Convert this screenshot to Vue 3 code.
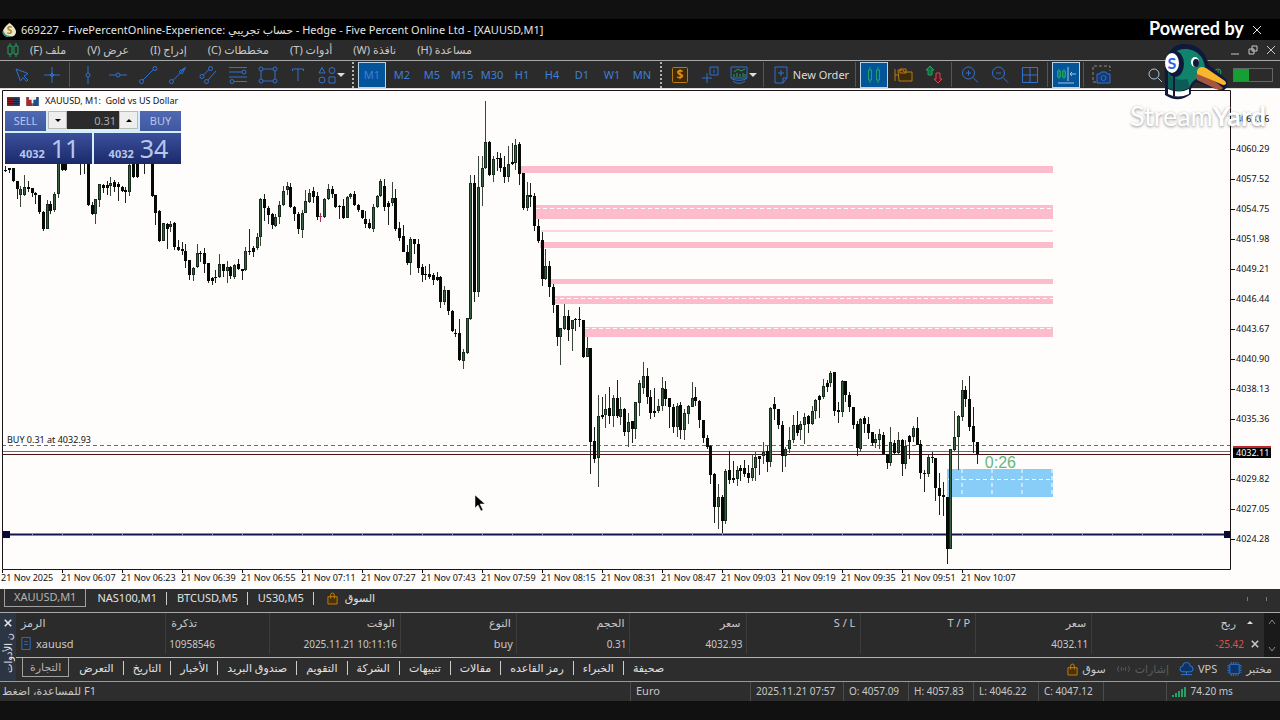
<template>
  <div class="screen">
    <header class="title-bar">
      <svg class="app-icon" viewBox="0 0 16 16">
        <path d="M8 1c3 2 7 6 7 9.500a5 5 0 0 1-5 5H6a5 5 0 0 1-5-5C1 7 5 3 8 1z" fill="#e9e6cf" />
        <path d="M1 10c1 4 3 5.500 7 5.500" stroke="#3f8f80" stroke-width="2" fill="none" />
        <text x="8" y="13" text-anchor="middle" font-size="11" font-weight="700" fill="#b08a1c">S</text>
      </svg>
      <h1>669227 - FivePercentOnline-Experience: <bdi>حساب تجريبي</bdi> - Hedge - Five Percent Online Ltd - [XAUUSD,M1]</h1>
      <button class="plain close" aria-label="Close">
        <svg viewBox="0 0 10 10"><path d="M1 1l8 8M9 1l-8 8" /></svg>
      </button>
    </header>

    <nav class="menu-bar">
      <svg class="menu-icon" viewBox="0 0 12 14">
        <path d="M3 0v3M3 11v3M9 0v3M9 11v3M1 3h4v8H1zM7 3h4v8H7z" />
      </svg>
      <button v-for="item in menu" :key="item" class="plain menu-item" dir="rtl">{{ item }}</button>
      <div class="window-buttons">
        <button class="plain" aria-label="Minimize"><svg viewBox="0 0 10 10"><path d="M1 9h8" /></svg></button>
        <button class="plain" aria-label="Restore"><svg viewBox="0 0 10 10"><path d="M4 1h5v5H4zM1 4h5v5H1z" /></svg></button>
        <button class="plain" aria-label="Close chart"><svg viewBox="0 0 10 10"><path d="M1 1l8 8M9 1l-8 8" /></svg></button>
      </div>
    </nav>

    <div class="toolbar">
      <button v-for="tool in pointerTools" :key="tool.name" class="tool" :aria-label="tool.name">
        <svg viewBox="0 0 20 20"><path :d="tool.d" /></svg>
      </button>
      <i class="sep"></i>
      <button v-for="tool in drawTools" :key="tool.name" class="tool" :aria-label="tool.name">
        <svg viewBox="0 0 20 20"><path :d="tool.d" /></svg>
      </button>
      <button class="tool with-caret" aria-label="Shapes">
        <svg viewBox="0 0 20 20"><path d="M5 2.500L8 8H2zM15 2.500a3 3 0 1 1 0 6a3 3 0 1 1 0-6M5 12a3 3 0 1 1 0 6a3 3 0 1 1 0-6M12 12h6v6h-6z" /></svg>
        <i class="caret"></i>
      </button>
      <i class="grip"></i>
      <button v-for="tf in timeframes" :key="tf" class="tool" :class="{ active: tf === timeframe }" @click="timeframe = tf">{{ tf }}</button>
      <i class="grip"></i>
      <button class="tool gold" aria-label="Symbols">
        <svg viewBox="0 0 20 20">
          <rect x="2.500" y="2.500" width="15" height="15" rx="1" fill="#3d2a08" />
          <text x="10" y="14" text-anchor="middle" font-size="12" font-weight="700">$</text>
        </svg>
      </button>
      <button class="tool" aria-label="Data window">
        <svg viewBox="0 0 20 20"><path d="M7 8v10M2 13h10M10 2h8v8h-8zM14 5v3M14 3.500v.5" /></svg>
      </button>
      <button class="tool with-caret" aria-label="Indicators">
        <svg viewBox="0 0 20 20">
          <path d="M2 2h16v11H2zM2 13c2 3 14 3 16 0M4 16c3 3 9 3 12 0" />
          <path class="green" d="M5 7l4-3 3 2 4-2M5 12V9M8 12V8M11 12V9M14 12V8M16 12V9" />
        </svg>
        <i class="caret"></i>
      </button>
      <i class="sep"></i>
      <button class="tool new-order">
        <svg viewBox="0 0 20 20"><path d="M4 2h12v11l-4 5H4zM16 13h-4v5M7 8h6M10 5v6" /></svg>
        New Order
      </button>
      <i class="sep"></i>
      <button class="tool active" aria-label="Candles">
        <svg class="green" viewBox="0 0 20 20"><path d="M6 2v3M6 15v3M14 2v3M14 15v3M4.500 5h3v10h-3zM12.500 5h3v10h-3z" /></svg>
      </button>
      <button class="tool gold" aria-label="Objects">
        <svg viewBox="0 0 20 20"><path d="M1 4v12M1 10h4M4 5h5l1 2h8v9H5z" fill="#3d2a08" /><path d="M6 4h6v4H6z" /></svg>
      </button>
      <button class="tool" aria-label="Auto trading">
        <svg viewBox="0 0 20 20">
          <path class="green" d="M6 1l4 4H8v5H4V5H2z" fill="#17693f" />
          <path class="red" d="M14 18l-4-4h2V8h4v6h2z" fill="#5c1820" />
        </svg>
      </button>
      <i class="sep"></i>
      <button class="tool" aria-label="Zoom in">
        <svg viewBox="0 0 20 20"><circle cx="8.500" cy="8" r="6" /><path d="M13 12.500l5 5M6 8h5M8.500 5.500v5" /></svg>
      </button>
      <button class="tool" aria-label="Zoom out">
        <svg viewBox="0 0 20 20"><circle cx="8.500" cy="8" r="6" /><path d="M13 12.500l5 5M6 8h5" /></svg>
      </button>
      <button class="tool" aria-label="Tile windows">
        <svg viewBox="0 0 20 20"><path d="M2.500 2.500h15v15h-15zM10 2.500v15M2.500 10h15" /></svg>
      </button>
      <i class="sep"></i>
      <button class="tool active" aria-label="Chart shift">
        <svg viewBox="0 0 20 20">
          <path class="green" d="M3 4v10M1.500 6h3v6h-3zM8 4v10M6.500 6h3v6h-3z" />
          <path class="pale" d="M12 2v14M20 9h-6M16 7l-2 2 2 2M2 18h16" />
        </svg>
      </button>
      <i class="sep"></i>
      <button class="tool" aria-label="Screenshot">
        <svg viewBox="0 0 20 20">
          <path class="grey" stroke-dasharray="3 2" d="M4 17H1V1h17v5" />
          <path d="M5 9h3l1-2h5l1 2h3v9H5z" fill="#123a70" /><circle cx="11.500" cy="13" r="2.500" />
        </svg>
      </button>
      <div class="toolbar-end">
        <button class="tool" aria-label="Search">
          <svg class="pale" viewBox="0 0 20 20"><circle cx="9" cy="9" r="5" /><path d="M13 13l4 4" /></svg>
        </button>
        <button class="tool" aria-label="Update">
          <svg class="green" viewBox="0 0 20 20"><circle cx="10" cy="7" r="3" /><path d="M10 5v10" /></svg>
        </button>
        <span class="battery"><i></i></span>
      </div>
    </div>

    <main class="chart">
      <div class="plot">
        <svg class="plot-canvas" viewBox="0 0 1231 481" preserveAspectRatio="none">
          <g transform="translate(0 1)">
            <rect v-for="zone in zones" :key="zone.y" :x="zone.x" :y="zone.y" :width="1053 - zone.x" :height="zone.h" :fill="zone.fill" />
            <path d="M536 118.500h517M553 208.500h500M585 238.500h468" class="grid-line" />
            <path d="M948 389.500h105M962 379v28M992 379v28M1022 379v28M1052 379v28" class="grid-line" />
            <path d="M2 355.500H1230" stroke="#3f8a4c" stroke-dasharray="4 3" />
            <path d="M2 361.500H1230" stroke="#c4474d" />
            <path d="M2 364.500H1230" stroke="#4a1518" />
            <path d="M2 444.500H1230" stroke="#14124f" stroke-width="2" />
            <path d="M32 444.500H1230" stroke="#9a98c4" stroke-width="2" stroke-dasharray="1 29" />
            <path d="M3 441h7v7H3zM1224 441h7v7h-7z" fill="#0a0a38" />
            <g v-for="(c, i) in candles" :key="i" :class="['candle', c[4] === 1 ? 'up' : c[4] === 2 ? 'flat' : 'down']">
              <path class="wick" :d="`M${candleX(i) + 0.5} ${c[0]}V${c[3]}`" />
              <rect :x="candleX(i) - 1" :y="c[1]" width="3" :height="Math.max(c[2] - c[1], 1)" />
              <path v-if="c[4] === 1 && c[2] - c[1] > 2" class="core" :d="`M${candleX(i) + 0.5} ${c[1] + 1}V${c[2] - 1}`" />
            </g>
            <path d="M2.500 479.500V.5H1230.500V479.500z" class="frame" />
          </g>
        </svg>

        <div class="symbol-title">
          <svg viewBox="0 0 14 10"><path d="M0 0h14v10H0z" fill="#26406f" /><path d="M0 0h7v10H0z" fill="#8f1f22" /><path d="M0 2.500h14M0 5h14M0 7.500h14" stroke="#18182a" /></svg>
          <svg viewBox="0 0 14 10"><path d="M0 0h7v10H0z" fill="#a32a2e" /><path d="M7 0h7v10H7z" fill="#1c4f82" /><path d="M3 0h8v3H8v4H6V3H3z" fill="#f2f2f2" /></svg>
          <span>XAUUSD, M1:&nbsp; Gold vs US Dollar</span>
        </div>

        <div class="trade-panel">
          <span class="side">SELL</span>
          <div class="volume">
            <button aria-label="Less" @click="step(-0.01)"><i class="caret dark"></i></button>
            <input v-model="volume" aria-label="Volume" />
            <button aria-label="More" @click="step(0.01)"><i class="caret dark up"></i></button>
          </div>
          <span class="side">BUY</span>
          <div class="quotes">
            <button class="quote"><b>4032</b><span>11</span></button>
            <button class="quote"><b>4032</b><span>34</span></button>
          </div>
        </div>

        <span class="position-label">BUY 0.31 at 4032.93</span>
        <span class="countdown">0:26</span>
        <svg class="mouse" viewBox="0 0 12 18"><path d="M1 2v13l3-3 3 6 2-1-3-6h5z" fill="#000" stroke="#fff" stroke-width=".5" /></svg>
      </div>

      <div class="price-axis">
        <span v-for="price in prices" :key="price" :class="{ current: price === '4032.11' }">{{ price }}</span>
      </div>
      <div class="time-axis">
        <span v-for="time in times" :key="time">{{ time }}</span>
      </div>
    </main>

    <nav class="chart-tabs">
      <button v-for="(tab, i) in chartTabs" :key="tab" class="plain" :class="{ selected: i === 0 }">{{ tab }}</button>
      <button class="plain market">
        <svg class="bag" viewBox="0 0 12 14"><path d="M1 5h10v8H1zM4 7V3a2 2 0 0 1 4 0v4" /></svg>
        السوق
      </button>
      <span class="tab-arrows"><i></i><i></i></span>
    </nav>

    <section class="toolbox">
      <aside>
        <button class="plain" aria-label="Close toolbox"><svg viewBox="0 0 10 10"><path d="M1 1l8 8M9 1l-8 8" /></svg></button>
        <span>ن الأدوات</span>
      </aside>
      <div class="toolbox-body">
        <div class="table-wrap">
          <table>
            <colgroup><col v-for="(w, i) in columnWidths" :key="i" :style="{ width: w + '%' }" /></colgroup>
            <thead>
              <tr><th v-for="(h, i) in headers" :key="i" :class="{ last: i === 9 }">{{ h }}<i v-if="i === 9" class="caret up"></i></th></tr>
            </thead>
            <tbody>
              <tr>
                <td class="symbol"><svg class="doc" viewBox="0 0 10 14"><path d="M.5.5h9v13h-9zM3 5h4M3 8h4" /></svg>xauusd</td>
                <td>10958546</td>
                <td>2025.11.21 10:11:16</td>
                <td class="symbol">buy</td>
                <td>0.31</td>
                <td>4032.93</td>
                <td></td>
                <td></td>
                <td>4032.11</td>
                <td class="last"><span class="loss">-25.42</span><button class="plain" aria-label="Close position"><svg viewBox="0 0 10 10"><path d="M1 1l8 8M9 1l-8 8" /></svg></button></td>
              </tr>
            </tbody>
          </table>
          <div class="scrollbar">
            <svg viewBox="0 0 8 6"><path d="M1 5l3-4 3 4" /></svg>
            <svg viewBox="0 0 8 6"><path d="M1 1l3 4 3-4" /></svg>
          </div>
        </div>
        <nav class="toolbox-tabs">
          <button v-for="(tab, i) in toolboxTabs" :key="tab" class="plain" :class="{ selected: i === 0 }" dir="rtl">{{ tab }}</button>
          <div class="services">
            <a href="#"><svg class="bag" viewBox="0 0 12 14"><path d="M1 5h10v8H1zM4 7V3a2 2 0 0 1 4 0v4" /></svg>سوق</a>
            <a href="#" class="dim"><svg class="wide" viewBox="0 0 16 14"><path d="M3 4q-3 3 0 6M6 5q-1 2 0 4M10 5q1 2 0 4M13 4q3 3 0 6M8 6v2" /></svg>إشارات</a>
            <a href="#"><svg class="wide blue" viewBox="0 0 16 14"><path d="M4 10a3 3 0 0 1 0-6a4 4 0 0 1 8 0a3 3 0 0 1 0 6zM8 10v3M2 13h12" /></svg>VPS</a>
            <a href="#"><svg class="wide blue" viewBox="0 0 16 14"><path d="M3 2h10v10H3z" /><path stroke-dasharray="1 1.500" d="M4 .5h8M4 13.500h8M1.500 3v8M14.500 3v8" stroke-width="2" /></svg>مختبر</a>
          </div>
        </nav>
      </div>
    </section>

    <footer class="status-bar">
      <span class="hint"><bdi dir="rtl">F1 للمساعدة، اضغط</bdi></span>
      <span class="profile">Euro</span>
      <span class="date">2025.11.21 07:57</span>
      <span class="ohlc">O: 4057.09</span>
      <span class="ohlc">H: 4057.83</span>
      <span class="ohlc">L: 4046.22</span>
      <span class="ohlc">C: 4047.12</span>
      <span class="gap"></span>
      <span class="ping">
        <svg viewBox="0 0 14 11"><path d="M1 11V9M4 11V7M7 11V5M10 11V3M13 11V1" /></svg>
        74.20 ms
      </span>
    </footer>

    <div class="watermark">
      <span class="powered">Powered by</span>
      <svg class="duck" viewBox="0 0 70 60">
        <path d="M5 53V33C4 13 12 1 25 2C38 2 46 11 49 23L67 38Q69 45 63 49L50 45L36 40Q30 44 31 52Q18 62 5 53z" fill="#10193a" />
        <path d="M8 46V28C9 14 15 7 25 7C37 7 45 16 45 27C43 36 32 36 29 46z" fill="#11836c" />
        <path d="M8 46V32q9 8 19 5q2 3 2 9q-10 6-21 0z" fill="#0b5c55" />
        <path d="M8 47q11 5 21 0v5q-11 5-21 0z" fill="#fff" />
        <path d="M14 34v20" stroke="#10193a" stroke-width="2" />
        <path d="M36 32q14 2 27 14q-1 3-7 1L37 38z" fill="#a5563c" />
        <path d="M37 29q2-6 9-3l19 13q3 4-2 4Q50 37 37 32z" fill="#f8b62d" />
        <ellipse cx="35" cy="20" rx="4" ry="5" fill="#fff" />
        <ellipse cx="36" cy="21" rx="3" ry="4" fill="#10193a" />
        <ellipse cx="15" cy="22" rx="9" ry="13" fill="#10193a" />
        <ellipse cx="12" cy="21" rx="7" ry="10" fill="#fff" />
        <text x="12" y="27" text-anchor="middle" font-size="16" font-weight="700" fill="#2563eb">S</text>
      </svg>
      <span class="brand">Stream<b>Yard</b></span>
    </div>
  </div>
</template>

<script setup>
import { ref } from 'vue';

const menu = ['ملف (F)', 'عرض (V)', 'إدراج (I)', 'مخططات (C)', 'أدوات (T)', 'نافذة (W)', 'مساعدة (H)'];

const pointerTools = [
  { name: 'Cursor', d: 'M4 4L16 8.500L12 11L16 15L14.500 16.500L11 12.500L8.500 16z' },
  { name: 'Crosshair', d: 'M10 2v16M2 10h16M10 8l2 2-2 2-2-2z' },
];

const drawTools = [
  { name: 'Vertical line', d: 'M10 1v7M10 12v7M10 8a2 2 0 1 1 0 4a2 2 0 1 1 0-4' },
  { name: 'Horizontal line', d: 'M1 10h7M12 10h7M10 8a2 2 0 1 1 0 4a2 2 0 1 1 0-4' },
  { name: 'Trend line', d: 'M5 15L15.500 4.500M3.500 14.500a2 2 0 1 1 0 4a2 2 0 1 1 0-4M17 1.500a2 2 0 1 1 0 4a2 2 0 1 1 0-4' },
  { name: 'Arrow', d: 'M5.500 15L16 4M3.500 14.500a2 2 0 1 1 0 4a2 2 0 1 1 0-4M11 6.500L17.500 2.500L14 9z' },
  { name: 'Channel', d: 'M5.500 10L11 4.500M10 15L18 6M12.500 1.500a2 2 0 1 1 0 4a2 2 0 1 1 0-4M4 9.500a2 2 0 1 1 0 4a2 2 0 1 1 0-4M8.500 14.500a2 2 0 1 1 0 4a2 2 0 1 1 0-4' },
  { name: 'Fibonacci', d: 'M1 2.500h18M1 7h13M1 12h18M6 16.500h13M16 5a2 2 0 1 1 0 4a2 2 0 1 1 0-4M4 14.500a2 2 0 1 1 0 4a2 2 0 1 1 0-4' },
  { name: 'Rectangle', d: 'M5 4h10M5 16h10M3 6v8M17 6v8M3 2a2 2 0 1 1 0 4a2 2 0 1 1 0-4M17 2a2 2 0 1 1 0 4a2 2 0 1 1 0-4M3 14a2 2 0 1 1 0 4a2 2 0 1 1 0-4M17 14a2 2 0 1 1 0 4a2 2 0 1 1 0-4' },
  { name: 'Text', d: 'M4.500 6V4h11v2M10 4v12' },
];

const timeframes = ['M1', 'M2', 'M5', 'M15', 'M30', 'H1', 'H4', 'D1', 'W1', 'MN'];
const timeframe = ref('M1');

const volume = ref('0.31');
const step = (delta) => {
  volume.value = Math.max(0.01, Number(volume.value) + delta).toFixed(2);
};

const prices = [
  '4063.06', '4060.29', '4057.52', '4054.75', '4051.98', '4049.21', '4046.44', '4043.67',
  '4040.90', '4038.13', '4035.36', '4032.11', '4029.82', '4027.05', '4024.28',
];
const times = [
  '21 Nov 2025', '21 Nov 06:07', '21 Nov 06:23', '21 Nov 06:39', '21 Nov 06:55', '21 Nov 07:11',
  '21 Nov 07:27', '21 Nov 07:43', '21 Nov 07:59', '21 Nov 08:15', '21 Nov 08:31', '21 Nov 08:47',
  '21 Nov 09:03', '21 Nov 09:19', '21 Nov 09:35', '21 Nov 09:51', '21 Nov 10:07',
];

const zones = [
  { x: 519, y: 76, h: 7, fill: '#fdbccb' },
  { x: 534, y: 115, h: 14, fill: '#fdbccb' },
  { x: 541, y: 140, h: 2, fill: '#fdd3dc' },
  { x: 540, y: 152, h: 6, fill: '#fdbccb' },
  { x: 551, y: 189, h: 5, fill: '#fdbccb' },
  { x: 552, y: 206, h: 8, fill: '#fdbccb' },
  { x: 584, y: 237, h: 10, fill: '#fdbccb' },
  { x: 947, y: 379, h: 28, fill: '#87cdf8' },
];

// high, body top, body bottom, low, kind (1 = up, 2 = unchanged)
const candles = [
  [76, 80, 81, 82], [78, 78, 80, 83], [78, 78, 91, 92], [91, 91, 99, 109], [96, 99, 105, 117, 1],
  [85, 97, 105, 106, 1], [91, 97, 99, 102], [98, 98, 103, 107], [102, 103, 105, 114], [105, 105, 122, 124],
  [121, 122, 139, 141], [110, 114, 139, 139, 1], [111, 114, 121, 124], [102, 104, 120, 122, 1], [70, 70, 104, 108, 1],
  [70, 70, 80, 81], [70, 72, 80, 81], [60, 62, 70, 72], [58, 60, 66, 70, 1], [58, 60, 66, 70],
  [65, 66, 70, 85], [65, 68, 72, 84], [70, 70, 115, 116], [112, 115, 124, 125], [109, 109, 124, 134, 1],
  [94, 94, 110, 117, 1], [94, 95, 98, 103], [91, 95, 98, 105], [87, 93, 96, 106, 1], [90, 92, 97, 102],
  [92, 94, 97, 111], [96, 97, 101, 102], [97, 100, 102, 113], [70, 75, 102, 106, 1], [70, 72, 87, 88],
  [70, 72, 87, 88], [60, 62, 66, 70, 1], [65, 68, 70, 84], [60, 62, 68, 70], [70, 70, 106, 107],
  [105, 105, 123, 135], [120, 121, 151, 152], [133, 133, 151, 151, 1], [133, 134, 139, 159], [131, 134, 137, 142, 1],
  [132, 133, 157, 160], [150, 157, 160, 161], [152, 159, 161, 165], [154, 161, 171, 178], [170, 170, 185, 190],
  [177, 178, 185, 191, 1], [154, 163, 177, 178, 1], [161, 163, 164, 172], [158, 163, 174, 183], [173, 173, 191, 193],
  [187, 188, 191, 195], [180, 187, 188, 193], [164, 174, 187, 188, 1], [174, 174, 181, 187], [171, 177, 181, 193, 1],
  [176, 177, 186, 189], [174, 175, 187, 189, 1], [169, 174, 179, 180], [179, 179, 181, 190], [157, 161, 180, 181, 1],
  [139, 161, 162, 165], [156, 158, 162, 167], [143, 147, 158, 160, 1], [108, 109, 147, 156, 1], [104, 109, 118, 131],
  [116, 118, 125, 134], [123, 124, 135, 139], [124, 127, 136, 137, 1], [111, 115, 127, 134, 1], [96, 101, 115, 116, 1],
  [92, 96, 100, 105, 1], [93, 97, 117, 118], [116, 117, 124, 131], [122, 124, 139, 144], [120, 123, 140, 148, 1],
  [100, 111, 123, 123, 1], [99, 103, 112, 113, 1], [97, 101, 107, 113], [102, 106, 127, 130], [123, 126, 127, 132, 2],
  [108, 109, 127, 128, 1], [94, 99, 109, 110, 1], [96, 99, 104, 108], [104, 104, 117, 118], [115, 116, 117, 129],
  [109, 116, 128, 129], [106, 107, 128, 128, 1], [103, 104, 107, 109, 1], [101, 104, 115, 116], [114, 115, 120, 122],
  [120, 120, 128, 129], [121, 129, 134, 138], [129, 133, 138, 139], [114, 117, 139, 142, 1], [105, 106, 117, 118, 1],
  [89, 91, 106, 107, 1], [89, 96, 117, 121], [111, 113, 117, 135], [92, 108, 113, 116, 1], [99, 108, 139, 141],
  [132, 138, 148, 151], [135, 146, 162, 162], [155, 162, 173, 175], [147, 149, 173, 185, 1], [149, 149, 154, 164],
  [149, 154, 178, 183], [174, 177, 185, 192], [176, 184, 185, 190], [174, 184, 187, 189], [183, 185, 190, 195],
  [182, 187, 190, 191], [186, 187, 212, 218], [196, 200, 212, 215, 1], [200, 200, 221, 225], [220, 221, 241, 242],
  [239, 243, 244, 247], [229, 243, 270, 271], [259, 262, 271, 279, 1], [228, 228, 263, 264, 1], [85, 93, 229, 230, 1],
  [85, 93, 202, 212], [66, 97, 202, 207, 1], [66, 78, 97, 116, 1], [11, 52, 78, 79, 1], [51, 52, 85, 86],
  [66, 69, 85, 92, 1], [62, 68, 69, 81], [63, 68, 78, 82], [66, 77, 87, 93], [56, 74, 87, 92, 1],
  [53, 72, 74, 75], [49, 55, 73, 80, 1], [52, 54, 84, 95], [83, 83, 118, 120], [92, 105, 118, 121, 1],
  [93, 105, 107, 117], [103, 106, 136, 141], [129, 136, 151, 153], [142, 150, 189, 196], [159, 176, 189, 190, 1],
  [171, 176, 197, 207], [194, 197, 215, 223], [215, 215, 247, 256], [238, 238, 247, 275, 1], [214, 226, 239, 240, 1],
  [220, 226, 240, 251], [230, 230, 239, 261, 1], [228, 229, 230, 241], [217, 229, 230, 237], [230, 230, 267, 268],
  [247, 258, 267, 267, 1], [258, 258, 352, 384], [337, 351, 369, 373], [305, 326, 368, 397, 1], [307, 325, 327, 329],
  [304, 319, 325, 338, 1], [297, 318, 326, 334], [305, 308, 326, 337, 1], [290, 308, 326, 328], [307, 319, 327, 335, 1],
  [318, 319, 342, 346], [323, 332, 342, 357, 1], [331, 331, 339, 353], [312, 312, 339, 349, 1], [290, 293, 313, 326, 1],
  [272, 286, 298, 304, 1], [278, 286, 307, 314], [300, 307, 323, 329], [298, 321, 323, 327], [309, 316, 321, 323, 1],
  [287, 298, 316, 321, 1], [291, 299, 309, 316], [308, 308, 317, 338], [314, 317, 337, 343], [313, 316, 337, 347, 1],
  [312, 315, 340, 349], [319, 323, 340, 350, 1], [315, 316, 324, 334, 1], [292, 308, 317, 317, 1], [297, 307, 311, 316],
  [310, 311, 330, 338], [330, 330, 348, 353], [345, 348, 357, 359], [355, 356, 385, 394], [383, 384, 417, 433],
  [394, 407, 417, 439, 1], [405, 407, 431, 443], [379, 381, 431, 434, 1], [361, 380, 390, 394], [371, 388, 390, 393],
  [376, 380, 389, 396, 1], [375, 378, 381, 391], [370, 378, 384, 387], [375, 383, 388, 393], [364, 378, 388, 391, 1],
  [362, 367, 378, 391, 1], [366, 366, 369, 385], [352, 362, 366, 374, 1], [356, 361, 372, 382], [317, 318, 372, 377, 1],
  [307, 314, 319, 330], [319, 319, 335, 339], [331, 335, 366, 382], [357, 359, 366, 377, 1], [337, 350, 359, 363, 1],
  [325, 335, 350, 353, 1], [321, 335, 343, 346], [331, 334, 340, 350, 1], [323, 327, 335, 354, 1], [325, 326, 334, 343],
  [316, 321, 334, 335, 1], [309, 310, 321, 329, 1], [305, 306, 310, 328], [289, 296, 307, 309, 1], [290, 293, 297, 302],
  [281, 283, 293, 297, 1], [282, 282, 321, 326], [312, 320, 322, 333], [290, 291, 322, 327, 1], [291, 291, 305, 312],
  [302, 305, 317, 322], [317, 317, 335, 339], [331, 334, 358, 366], [328, 329, 359, 362, 1], [326, 328, 334, 343],
  [327, 334, 343, 349], [342, 342, 353, 356], [344, 349, 353, 358, 1], [339, 344, 350, 359, 1], [342, 345, 364, 365],
  [364, 364, 373, 379], [337, 352, 373, 376, 1], [350, 353, 363, 365], [342, 350, 363, 365, 1], [349, 350, 374, 386],
  [350, 356, 374, 379, 1], [345, 346, 352, 369], [336, 338, 347, 352, 1], [327, 338, 355, 355], [350, 354, 383, 389],
  [380, 383, 384, 402], [365, 367, 384, 387, 1], [362, 367, 368, 373], [368, 368, 398, 411], [383, 398, 406, 425],
  [392, 405, 407, 426], [407, 407, 459, 474], [359, 359, 459, 459, 1], [321, 347, 360, 361, 1], [325, 326, 347, 380, 1],
  [290, 300, 327, 331, 1], [296, 300, 309, 317], [286, 309, 337, 341], [317, 336, 352, 363], [352, 352, 364, 374],
];

// 16 candles per 60 units
const candleX = (i) => Math.floor(5.75 + i * 3.75);

const chartTabs = ['XAUUSD,M1', 'NAS100,M1', 'BTCUSD,M5', 'US30,M5'];
const headers = ['الرمز', 'تذكرة', 'الوقت', 'النوع', 'الحجم', 'سعر', 'S / L', 'T / P', 'سعر', 'ربح'];
const columnWidths = [12, 8.3, 10.5, 9.3, 9.1, 9.3, 9.2, 9.2, 9.3, 13.8];
const toolboxTabs = [
  'التجارة', 'التعرض', 'التاريخ', 'الأخبار', 'صندوق البريد', 'التقويم',
  'الشركة', 'تنبيهات', 'مقالات', 'رمز القاعده', 'الخبراء', 'صحيفة',
];
</script>

<style>
html,
body,
#app {
  height: 100%;
}

body {
  margin: 0;
  background: #111;
}
</style>

<style scoped>
.screen {
  position: relative;
  display: flex;
  flex-direction: column;
  box-sizing: border-box;
  min-height: 100%;
  padding: 19px 0;
  background: #111;
  color: #c8c8c8;
  font-family: 'Noto Sans', 'DejaVu Sans', sans-serif;
  font-size: 11px;
  line-height: 16px;
  overflow: hidden;
}

button,
input {
  font: inherit;
  color: inherit;
}

.plain {
  padding: 0;
  border: 0;
  background: none;
  white-space: nowrap;
}

svg {
  fill: none;
  stroke: none;
  flex: none;
}

.plain svg {
  stroke: currentColor;
  width: 10px;
  height: 10px;
  display: block;
}

.title-bar {
  display: flex;
  align-items: center;
  height: 21px;
  padding: 0 18px 0 2px;
  background: #000;
  color: #e4e4e4;
}

.app-icon {
  width: 15px;
  height: 15px;
  margin-right: 4px;
}

.title-bar h1 {
  margin: 0;
  font-size: 11px;
  font-weight: 400;
  white-space: nowrap;
}

.title-bar .close {
  margin-left: auto;
}

.menu-bar {
  display: flex;
  align-items: center;
  gap: 21px;
  height: 20px;
  padding: 0 4px 0 7px;
  background: #2b2b2b;
  border-bottom: 1px solid #a8a8a8;
}

.menu-icon {
  width: 12px;
  height: 14px;
  margin-right: -10px;
  stroke: #1fa463;
}

.window-buttons {
  display: flex;
  gap: 8px;
  margin-left: auto;
}

.toolbar {
  display: flex;
  align-items: center;
  height: 27px;
  padding: 0 7px;
  background: #2b2b2b;
  border-bottom: 1px solid #d8d8d8;
  color: #3f7fd6;
}

.tool {
  display: flex;
  flex: none;
  align-items: center;
  justify-content: center;
  box-sizing: border-box;
  width: 30px;
  height: 26px;
  padding: 0;
  border: 0;
  background: none;
}

.tool svg {
  width: 20px;
  height: 20px;
  stroke: #3072d0;
}

.tool text {
  fill: #d98f16;
  stroke: none;
}

.tool.with-caret {
  width: 36px;
}

.tool.active {
  width: 28px;
  margin: 0 1px;
  border: 1px solid #b9d4e8;
  background: #04549a;
}

.tool.new-order {
  width: 86px;
  gap: 2px;
  color: #dcdcdc;
}

.tool.gold svg {
  stroke: #b97a14;
}

.tool .green,
.tool svg.green {
  stroke: #1fa463;
}

.tool .red {
  stroke: #d8434e;
}

.tool .pale,
.tool svg.pale {
  stroke: #a9c4d8;
}

.tool .grey {
  stroke: #888;
}

.caret {
  width: 0;
  height: 0;
  border: 4px solid transparent;
  border-top-color: #ddd;
  border-bottom: 0;
}

.caret.up {
  border-width: 3px;
  border-top: 0;
  border-bottom: 3px solid #ddd;
}

.caret.dark {
  border-width: 3px;
  border-top-color: #000;
  border-bottom: 0;
}

.caret.dark.up {
  border-top: 0;
  border-bottom: 3px solid #000;
}

.sep {
  flex: none;
  width: 1px;
  height: 25px;
  margin: 0 3px 0 2px;
  background: #555;
}

.grip {
  flex: none;
  height: 26px;
  margin: 0 3px;
  border-left: 2px dotted #b0b0b0;
}

.toolbar-end {
  display: flex;
  align-items: center;
  margin-left: auto;
}

.toolbar-end .tool:first-child {
  margin-right: 33px;
}

.battery {
  width: 38px;
  height: 12px;
  border: 1px solid #666;
}

.battery i {
  display: block;
  width: 40%;
  height: 100%;
  background: #16a034;
}

.chart {
  flex: 1;
  display: grid;
  grid-template-columns: 1fr 49px;
  grid-template-rows: 1fr 19px;
  min-height: 300px;
  background: #fffcfc;
  color: #111;
  font-size: 9px;
  line-height: 10px;
}

.plot {
  position: relative;
  min-height: 0;
}

.plot-canvas {
  position: absolute;
  width: 100%;
  height: 100%;
}

.grid-line {
  stroke: #fff;
  stroke-dasharray: 4 3;
}

.frame {
  stroke: #1c1418;
}

.candle rect {
  fill: #050a06;
}

.candle .wick {
  stroke: #1d221e;
}

.candle.up rect {
  fill: #172b1a;
}

.candle.up .wick {
  stroke: #3c463d;
}

.candle .core {
  stroke: #386040;
}

.candle.flat rect {
  fill: #b03060;
}

.candle.flat .wick {
  stroke: #b03060;
}

.symbol-title {
  position: absolute;
  top: 7px;
  left: 7px;
  display: flex;
  align-items: center;
}

.symbol-title svg {
  width: 13px;
  height: 9px;
  margin-right: 6px;
}

.trade-panel {
  position: absolute;
  top: 22px;
  left: 5px;
  display: grid;
  grid-template-columns: 41px 90px 41px;
  gap: 2px;
  width: 176px;
  background: #d5effa;
}

.side {
  height: 20px;
  background: linear-gradient(#5069b2, #3f58a2);
  color: #b9c6ea;
  font-size: 11px;
  line-height: 20px;
  text-align: center;
}

.volume {
  display: flex;
  height: 18px;
}

.volume button {
  display: flex;
  flex: none;
  align-items: center;
  justify-content: center;
  width: 19px;
  padding: 0;
  border: 1px solid #bbb;
  background: #eee;
}

.volume input {
  width: 0;
  flex: 1;
  padding: 0 3px;
  border: 0;
  background: #2b2b2b;
  color: #aaa;
  font-size: 11px;
  text-align: right;
}

.quotes {
  grid-column: 1 / -1;
  display: grid;
  grid-template-columns: 1fr 1fr;
  gap: 2px;
}

.quote {
  display: flex;
  align-items: baseline;
  justify-content: center;
  gap: 6px;
  height: 31px;
  padding: 0 0 0 2px;
  border: 0;
  background: linear-gradient(#3b509c, #1a296a);
  color: #b9c6ea;
}

.quote b {
  font-size: 11px;
}

.quote span {
  font-size: 25px;
  line-height: 31px;
}

.position-label {
  position: absolute;
  top: 72%;
  left: 7px;
}

.countdown {
  position: absolute;
  top: 76%;
  left: 80%;
  color: #5fb97c;
  font-family: 'Liberation Sans', sans-serif;
  font-size: 16px;
  line-height: 16px;
}

.mouse {
  position: absolute;
  top: 84%;
  left: 38.5%;
  width: 12px;
  height: 18px;
}

.price-axis {
  display: flex;
  flex-direction: column;
  justify-content: space-between;
  align-items: flex-start;
  padding: 25px 0 26px;
}

.price-axis span {
  display: flex;
  align-items: center;
  gap: 1px;
}

.price-axis span::before {
  content: '';
  width: 4px;
  border-top: 1px solid #111;
}

.price-axis .current {
  position: relative;
  top: 4px;
  left: 2px;
  padding-right: 2px;
  box-shadow: 0 -2px #c0272d;
  background: #000;
  color: #fff;
}

.price-axis .current::before {
  width: 2px;
}

.time-axis {
  grid-column: 1 / -1;
  display: grid;
  grid-template-columns: repeat(17, 60fr) 258fr;
  padding-left: 2px;
}

.time-axis span {
  padding-top: 3px;
  border-left: 1px solid transparent;
  border-image: linear-gradient(#111 4px, transparent 4px) 1;
  text-indent: -2px;
  white-space: nowrap;
}

.chart-tabs {
  display: flex;
  align-items: flex-start;
  height: 23px;
  padding-left: 4px;
  background: #2d2d2d;
  border-bottom: 1px solid #a8a8a8;
  color: #e2e2e2;
}

.chart-tabs button {
  padding: 1px 9px 0 10px;
  border-left: 1px solid transparent;
}

.chart-tabs button + button + button {
  border-image: linear-gradient(transparent 4px, #ccc 4px, #ccc 15px, transparent 15px) 1;
}

.chart-tabs .selected,
.toolbox-tabs .selected {
  border: 1px solid #a0a0a0;
  border-top: 0;
  color: #b4b4b4;
}

.chart-tabs .selected {
  padding: 0 9px 1px;
}

.chart-tabs .market {
  display: flex;
  align-items: center;
  gap: 7px;
  padding-left: 13px;
}

.plain .bag,
.bag {
  width: 11px;
  height: 13px;
  stroke: #c58212;
  fill: #4a3208;
}

.tab-arrows {
  display: flex;
  gap: 18px;
  margin: 8px 13px 0 auto;
}

.tab-arrows i {
  width: 1px;
  height: 4px;
  background: #777;
}

.toolbox {
  display: flex;
  height: 68px;
  background: #2b2b2b;
  border-bottom: 1px solid #999;
}

aside {
  display: flex;
  flex-direction: column;
  align-items: center;
  gap: 6px;
  width: 16px;
  padding-top: 6px;
  background: #2c3543;
  color: #e8e8e8;
  overflow: hidden;
}

aside .plain svg {
  width: 8px;
  height: 8px;
  stroke-width: 2;
}

aside span {
  writing-mode: vertical-rl;
  transform: rotate(180deg);
  font-size: 10px;
  white-space: nowrap;
}

.toolbox-body {
  flex: 1;
  min-width: 0;
}

.table-wrap {
  display: flex;
  height: 44px;
}

table {
  flex: 1;
  width: 0;
  height: 41px;
  table-layout: fixed;
  border-collapse: collapse;
}

th,
td {
  padding: 2px 3px 0;
  border-right: 1px solid #3c3c3c;
  font-weight: 400;
  text-align: right;
  white-space: nowrap;
}

td {
  font-size: 10px;
}

td.symbol {
  font-size: 11px;
}

th {
  padding: 2px 5px 0;
}

th:nth-child(-n + 2),
td:nth-child(-n + 2) {
  text-align: left;
}

.last {
  padding-right: 5px;
  border-right: 0;
}

.last .caret {
  display: inline-block;
  margin: 0 6px 3px 11px;
}

th.last {
  padding-right: 5px;
}

td .plain {
  margin-left: 7px;
}

td .plain svg {
  width: 8px;
  height: 8px;
  stroke-width: 2;
}

.loss {
  color: #d9534f;
}

.doc {
  width: 10px;
  height: 13px;
  margin: 0 5px 0 2px;
  stroke: #2c6fd0;
  vertical-align: -2px;
}

.scrollbar {
  display: flex;
  flex-direction: column;
  justify-content: space-between;
  align-items: center;
  width: 16px;
  padding: 6px 0 5px;
  box-sizing: border-box;
  background: #1a1a1a;
}

.scrollbar svg {
  width: 8px;
  height: 6px;
  stroke: #888;
}

.toolbox-tabs {
  display: flex;
  align-items: flex-start;
  height: 23px;
  padding-left: 6px;
  border-top: 1px solid #b4b4b4;
  background: #2d2d2d;
  color: #e2e2e2;
}

.toolbox-tabs > button {
  height: 19px;
  padding: 0 9px;
  border-left: 1px solid transparent;
}

.toolbox-tabs > .selected {
  padding: 0 7px;
}

.toolbox-tabs > button + button + button {
  border-image: linear-gradient(transparent 4px, #ccc 4px, #ccc 16px, transparent 16px) 1;
}

.services {
  display: flex;
  align-items: center;
  gap: 10px;
  margin-left: auto;
  padding: 3px 8px 0 0;
}

.services a {
  display: flex;
  align-items: center;
  gap: 4px;
  color: #c8c8c8;
  text-decoration: none;
}

.services .wide {
  width: 15px;
  height: 14px;
  stroke: currentColor;
}

.services .blue {
  stroke: #2c7be0;
  fill: #0d3468;
}

.services .dim {
  color: #5c5c5c;
}

.status-bar {
  display: flex;
  height: 19px;
  background: #2d2d2d;
  font-size: 10px;
  line-height: 18px;
  white-space: nowrap;
}

.status-bar span {
  flex: none;
  box-sizing: border-box;
  padding-left: 5px;
  border-left: 1px solid #4c4c4c;
}

.status-bar .hint {
  flex: 1;
  padding-left: 2px;
  border: 0;
  font-size: 11px;
}

.status-bar .profile {
  width: 120px;
  font-size: 11px;
}

.date {
  width: 93px;
}

.ohlc {
  width: 65px;
}

.gap {
  width: 63px;
}

.ping {
  width: 114px;
}

.ping svg {
  width: 14px;
  height: 11px;
  margin-right: 2px;
  stroke: #1fa463;
  stroke-width: 2;
  vertical-align: -2px;
}

.watermark {
  position: absolute;
  top: 17px;
  right: 14px;
  display: flex;
  flex-direction: column;
  color: #fff;
  font-family: Lato, sans-serif;
  pointer-events: none;
}

.powered {
  margin-left: 19px;
  font-size: 18px;
  font-weight: 700;
  line-height: 22px;
}

.duck {
  width: 70px;
  height: 60px;
  margin: 3px 0 0 30px;
}

.brand {
  font-size: 27px;
  line-height: 28px;
  text-shadow: 0 1px 3px rgba(0, 0, 0, 0.45);
}
</style>
